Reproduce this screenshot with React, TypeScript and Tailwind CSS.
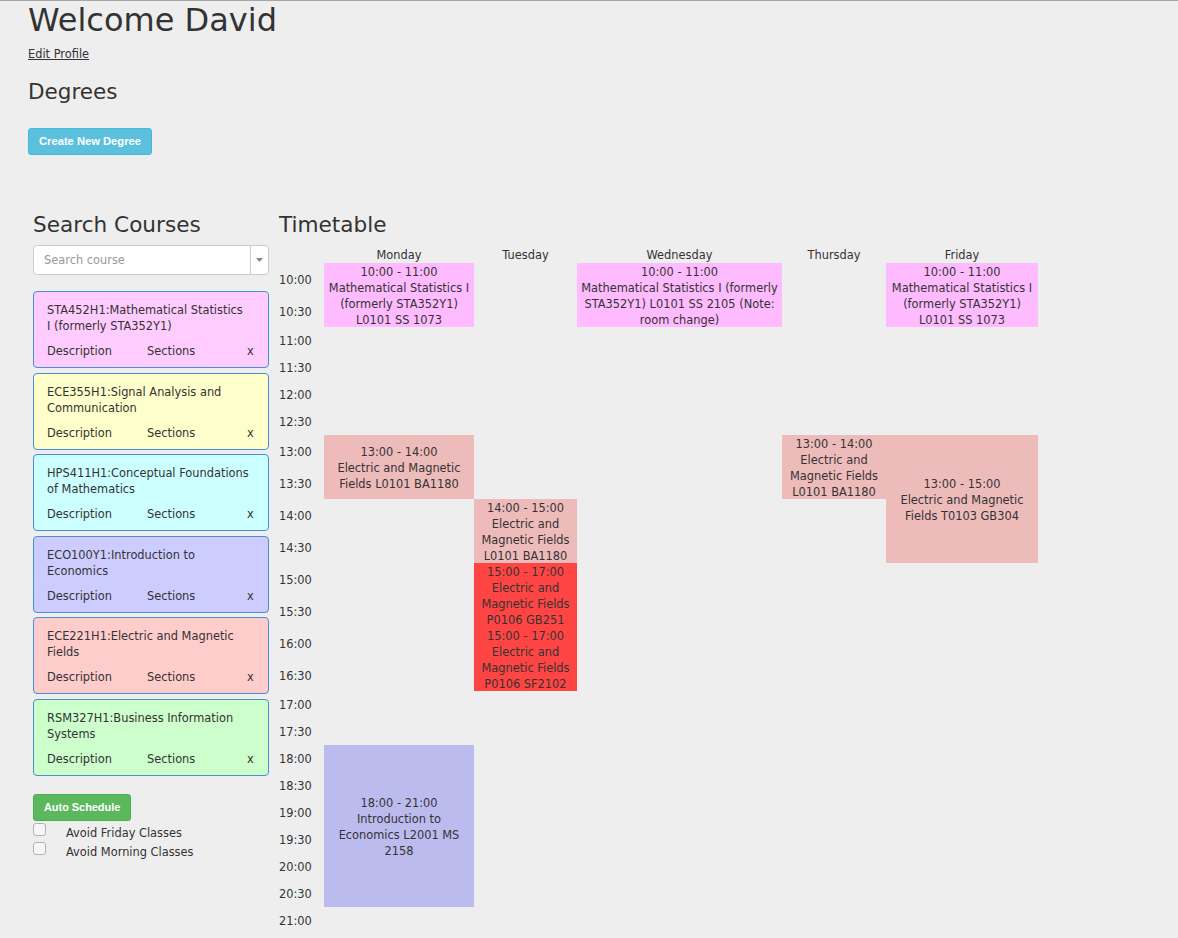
import React from "react";

type Course = {
  lines: string[];
  bg: string;
};

type Block = {
  pos: string;
  bg: string;
  lines: string[];
};

const courses: Course[] = [
  { lines: ["STA452H1:Mathematical Statistics", "I (formerly STA352Y1)"], bg: "bg-[#ffccff]" },
  { lines: ["ECE355H1:Signal Analysis and", "Communication"], bg: "bg-[#ffffcc]" },
  { lines: ["HPS411H1:Conceptual Foundations", "of Mathematics"], bg: "bg-[#ccffff]" },
  { lines: ["ECO100Y1:Introduction to", "Economics"], bg: "bg-[#ccccff]" },
  { lines: ["ECE221H1:Electric and Magnetic", "Fields"], bg: "bg-[#ffcccc]" },
  { lines: ["RSM327H1:Business Information", "Systems"], bg: "bg-[#ccffcc]" },
];

const days = [
  { name: "Monday", pos: "col-start-2" },
  { name: "Tuesday", pos: "col-start-3" },
  { name: "Wednesday", pos: "col-start-4" },
  { name: "Thursday", pos: "col-start-5" },
  { name: "Friday", pos: "col-start-6" },
];

const times = [
  "10:00", "10:30", "11:00", "11:30", "12:00", "12:30", "13:00", "13:30",
  "14:00", "14:30", "15:00", "15:30", "16:00", "16:30", "17:00", "17:30",
  "18:00", "18:30", "19:00", "19:30", "20:00", "20:30", "21:00",
];

const mathLines = ["10:00 - 11:00", "Mathematical Statistics I", "(formerly STA352Y1)", "L0101 SS 1073"];

const blocks: Block[] = [
  { pos: "col-start-2 row-start-2 row-span-2", bg: "bg-[#ffbbff]", lines: mathLines },
  {
    pos: "col-start-4 row-start-2 row-span-2",
    bg: "bg-[#ffbbff]",
    lines: ["10:00 - 11:00", "Mathematical Statistics I (formerly", "STA352Y1) L0101 SS 2105 (Note:", "room change)"],
  },
  { pos: "col-start-6 row-start-2 row-span-2", bg: "bg-[#ffbbff]", lines: mathLines },
  {
    pos: "col-start-2 row-start-8 row-span-2",
    bg: "bg-[#eebbbb]",
    lines: ["13:00 - 14:00", "Electric and Magnetic", "Fields L0101 BA1180"],
  },
  {
    pos: "col-start-5 row-start-8 row-span-2",
    bg: "bg-[#eebbbb]",
    lines: ["13:00 - 14:00", "Electric and", "Magnetic Fields", "L0101 BA1180"],
  },
  {
    pos: "col-start-6 row-start-8 row-span-4",
    bg: "bg-[#eebbbb]",
    lines: ["13:00 - 15:00", "Electric and Magnetic", "Fields T0103 GB304"],
  },
  {
    pos: "col-start-3 row-start-10 row-span-2",
    bg: "bg-[#eebbbb]",
    lines: ["14:00 - 15:00", "Electric and", "Magnetic Fields", "L0101 BA1180"],
  },
  {
    pos: "col-start-3 row-start-12 row-span-4",
    bg: "bg-[#ff4444]",
    lines: [
      "15:00 - 17:00", "Electric and", "Magnetic Fields", "P0106 GB251",
      "15:00 - 17:00", "Electric and", "Magnetic Fields", "P0106 SF2102",
    ],
  },
  {
    pos: "col-start-2 row-start-18 row-span-6",
    bg: "bg-[#bbbbee]",
    lines: ["18:00 - 21:00", "Introduction to", "Economics L2001 MS", "2158"],
  },
];

function CourseCard({ course }: { course: Course }) {
  return (
    <div className={"h-[77px] rounded-[4px] border border-[#4a8fd6] px-[13px] pt-[10px] pb-[8px] " + course.bg}>
      <div className="leading-[16px] whitespace-nowrap">
        {course.lines.map((l) => (
          <div key={l}>{l}</div>
        ))}
      </div>
      <div className="mt-[9px] flex leading-[16px]">
        <span className="w-[100px]">Description</span>
        <span className="w-[100px]">Sections</span>
        <span>x</span>
      </div>
    </div>
  );
}

function Timetable() {
  return (
    <div className="mt-[8px] grid grid-cols-[45px_150px_103px_205px_104px_152px] grid-rows-[18px_repeat(2,32px)_repeat(4,27px)_repeat(8,32px)_repeat(9,27px)] leading-[16px]">
      {days.map((d) => (
        <div key={d.name} className={"row-start-1 flex items-center justify-center pt-[2px] " + d.pos}>
          {d.name}
        </div>
      ))}
      {times.map((t, i) => (
        <div key={t} className="col-start-1 flex items-center pt-[1px]" style={{ gridRowStart: i + 2 }}>
          {t}
        </div>
      ))}
      {blocks.map((b, i) => (
        <div
          key={i}
          className={"flex flex-col items-center justify-center text-center whitespace-nowrap " + b.pos + " " + b.bg}
        >
          <div className="translate-y-[1px]">
            {b.lines.map((l, j) => (
              <div key={j}>{l}</div>
            ))}
          </div>
        </div>
      ))}
    </div>
  );
}

export default function App() {
  return (
    <div className="min-h-[938px] border-t border-[#a6a6a6] bg-[#eeeeee] font-['DejaVu_Sans',sans-serif] text-[11.4px] text-[#333]">
      <div className="pl-[28px] pt-[1px]">
        <h1 className="text-[32px] leading-[36px]">Welcome David</h1>
        <a href="#" className="mt-[8px] block w-fit leading-[16px] underline">
          Edit Profile
        </a>
        <h2 className="mt-[17px] text-[21.5px] leading-[26px]">Degrees</h2>
        <button className="mt-[23px] h-[27px] rounded-[3px] border border-[#46b8da] bg-[#5bc0de] px-[10px] font-['Liberation_Sans',sans-serif] text-[11.2px] font-bold text-white">
          Create New Degree
        </button>
      </div>

      <div className="mt-[56px] flex gap-[10px] pl-[33px]">
        {/* left: search + course list */}
        <div className="w-[236px]">
          <h2 className="pt-[2px] text-[21.6px] leading-[24px]">Search Courses</h2>
          <div className="mt-[8px] flex h-[30px] rounded-[4px] border border-[#cccccc] bg-white">
            <div className="flex flex-1 items-center pl-[10px] pt-[2px] text-[#999]">Search course</div>
            <div className="flex w-[18px] items-center justify-center border-l border-[#cccccc]">
              <svg width="7" height="4" viewBox="0 0 7 4">
                <path d="M0 0h7L3.5 4z" fill="#888" />
              </svg>
            </div>
          </div>
          <div className="mt-[16px] flex flex-col gap-[4.6px]">
            {courses.map((c) => (
              <CourseCard key={c.lines[0]} course={c} />
            ))}
          </div>
          <button className="mt-[18px] h-[27px] rounded-[3px] border border-[#4cae4c] bg-[#5cb85c] px-[10px] font-['Liberation_Sans',sans-serif] text-[10.9px] font-bold text-white">
            Auto Schedule
          </button>
          {["Avoid Friday Classes", "Avoid Morning Classes"].map((label) => (
            <label key={label} className="flex items-start">
              <input
                type="checkbox"
                className="mt-[2px] h-[13px] w-[13px] appearance-none rounded-[3px] border border-[#b3b3b3] bg-[#f6f6f6]"
              />
              <span className="ml-[20px] pt-[5px] leading-[14px]">{label}</span>
            </label>
          ))}
        </div>

        {/* right: timetable */}
        <div>
          <h2 className="pt-[2px] text-[21.6px] leading-[24px]">Timetable</h2>
          <Timetable />
        </div>
      </div>
    </div>
  );
}
